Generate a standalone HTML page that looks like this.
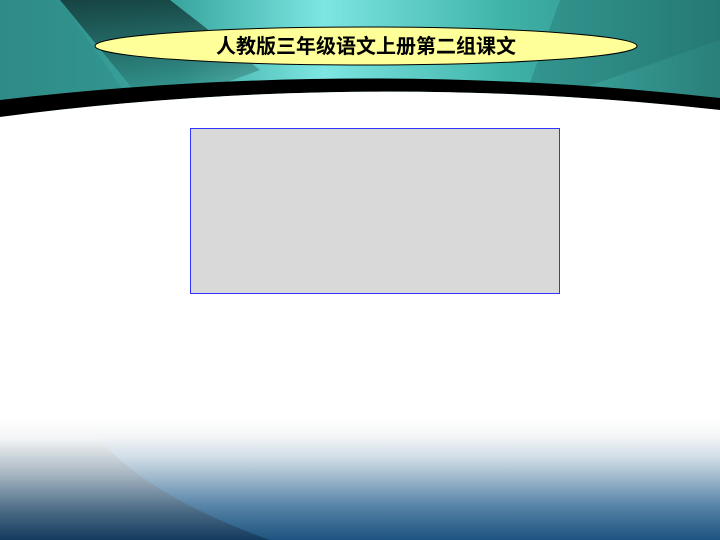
<!DOCTYPE html>
<html><head><meta charset="utf-8"><style>
html,body{margin:0;padding:0;width:720px;height:540px;overflow:hidden;background:#fff}
svg{display:block}
</style></head><body>
<svg width="720" height="540" viewBox="0 0 720 540" xmlns="http://www.w3.org/2000/svg">
<defs>
<linearGradient id="hd" x1="0" y1="0" x2="1" y2="0">
<stop offset="0" stop-color="#2f8a86"/>
<stop offset="0.25" stop-color="#3aa8a0"/>
<stop offset="0.45" stop-color="#7de6e2"/>
<stop offset="0.7" stop-color="#3fb3a8"/>
<stop offset="1" stop-color="#2a7f7a"/>
</linearGradient>
<linearGradient id="dk" x1="0" y1="0" x2="0" y2="1">
<stop offset="0" stop-color="#0f3030" stop-opacity="0.8"/>
<stop offset="1" stop-color="#0f3030" stop-opacity="0"/>
</linearGradient>
<linearGradient id="bt" x1="0" y1="0" x2="0" y2="1">
<stop offset="0" stop-color="#ffffff"/>
<stop offset="0.15" stop-color="#f4f5f6"/>
<stop offset="0.45" stop-color="#a7b6c2"/>
<stop offset="0.75" stop-color="#4d6c86"/>
<stop offset="1" stop-color="#123b5e"/>
</linearGradient>
<linearGradient id="bt2" x1="0" y1="0" x2="0" y2="1">
<stop offset="0" stop-color="#ffffff" stop-opacity="0"/>
<stop offset="0.3" stop-color="#d8e6f0" stop-opacity="0.6"/>
<stop offset="0.7" stop-color="#5b8db5" stop-opacity="0.7"/>
<stop offset="1" stop-color="#1f5a88" stop-opacity="0.8"/>
</linearGradient>
</defs>
<rect x="0" y="0" width="720" height="120" fill="url(#hd)"/>
<path d="M60 0 L170 0 L260 70 L150 110 Z" fill="url(#dk)"/>
<path d="M0 0 L60 0 L130 100 L0 110 Z" fill="#2e8b86" opacity="0.5"/>
<path d="M560 0 L720 0 L720 40 L520 110 Z" fill="#1f6e6a" opacity="0.35"/>
<path d="M0 100 Q360 58 720 98 L720 110 Q360 70 0 117 Z" fill="#000"/>
<path d="M0 117 Q360 70 720 110 L720 540 L0 540 Z" fill="#fff"/>
<rect x="0" y="420" width="720" height="120" fill="url(#bt)"/>
<path d="M85 420 Q130 490 270 540 L720 540 L720 420 Z" fill="url(#bt2)"/>
<ellipse cx="366" cy="46" rx="271" ry="19" fill="#ffff99" stroke="#000" stroke-width="1"/>
<text x="366" y="53" text-anchor="middle" textLength="300" lengthAdjust="spacingAndGlyphs" font-family="'Liberation Sans','Noto Sans CJK SC',sans-serif" font-size="20" font-weight="bold" fill="#000">人教版三年级语文上册第二组课文</text>
<rect x="190.5" y="128.5" width="369" height="165" fill="#d9d9d9" stroke="#3333ff" stroke-width="1"/>
</svg>
</body></html>
